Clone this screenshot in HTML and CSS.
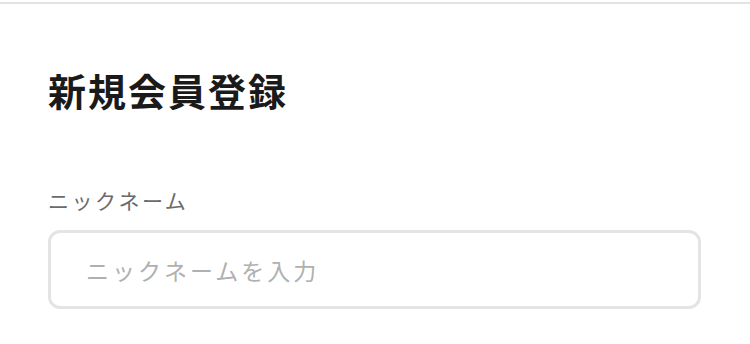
FILE: index.html
```html
<!DOCTYPE html>
<html lang="ja">
<head>
	<meta charset="UTF-8">
	<link rel="stylesheet" href="styles.css">
</head>
<body>
	<div class="topline"></div>
	<div class="page">
		<h1 class="title">新規会員登録</h1>
		<label class="label" for="nickname">ニックネーム</label>
		<input class="field" id="nickname" type="text" placeholder="ニックネームを入力">
	</div>
</body>
</html>
```
FILE: styles.css
```css
body {
	margin: 0px;
	background-color: #ffffff;
	font-family: "Noto Sans CJK JP", "Noto Sans", sans-serif;
}
.topline {
	margin-top: 2px;
	height: 2px;
	background-color: #e3e3e3;
}
.page {
	padding: 0 49px 0 48px;
}
.title {
	margin: 0;
	padding-top: 58px;
	font-size: 38px;
	line-height: 56px;
	font-weight: 700;
	letter-spacing: 2px;
	color: #1a1a1a;
}
.label {
	display: block;
	margin-top: 68px;
	font-size: 21px;
	line-height: 28px;
	letter-spacing: 2.5px;
	color: #6b6b6b;
}
.field {
	display: block;
	box-sizing: border-box;
	width: 100%;
	height: 79px;
	margin-top: 16px;
	padding: 0 0 0 35px;
	border: 3px solid #e4e4e4;
	border-radius: 12px;
	outline: none;
	font-family: "Noto Sans CJK JP", "Noto Sans", sans-serif;
	font-size: 23px;
	letter-spacing: 3px;
	color: #333333;
}
.field::placeholder {
	color: #b0b0b0;
}
```
